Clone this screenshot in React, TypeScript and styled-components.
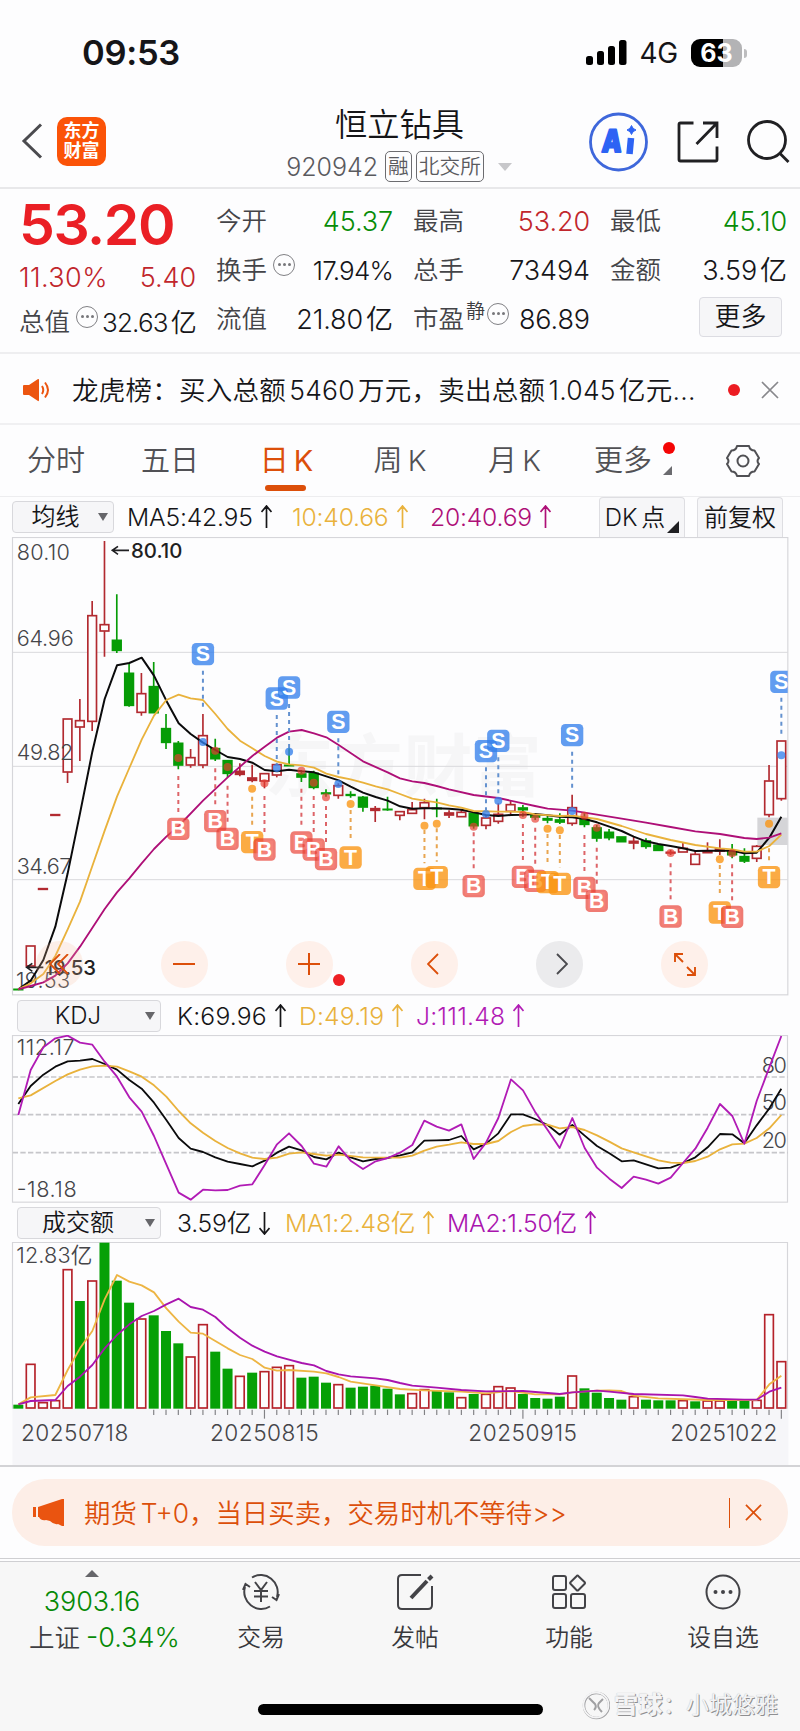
import React from "react";
import styled, { createGlobalStyle } from "styled-components";

const FONT = `Inter, "Noto Sans CJK SC", "Liberation Sans", sans-serif`;
const RED = "#b22a30";
const GREEN = "#069c06";
const AMBER = "#e9b23c";
const ORANGE = "#dc4f0a";

const GlobalStyle = createGlobalStyle`
  * { box-sizing: border-box; }
  body { margin: 0; background: #fdfdfe; font-family: ${FONT}; font-weight: 350; color: #151518; }
  button { font: inherit; color: inherit; border: 0; background: none; padding: 0; }
  svg { display: block; flex: none; }
`;

const Screen = styled.div`
  width: 800px;
  height: 1731px;
  overflow: hidden;
  display: flex;
  flex-direction: column;
  white-space: nowrap;
  line-height: 1;
`;

/* ---------- status bar ---------- */
const StatusBar = styled.div`
  height: 92px;
  padding: 14px 53px 0 82px;
  display: flex;
  align-items: center;
`;
const Clock = styled.div`
  font-size: 34.5px;
  font-weight: 600;
  letter-spacing: -0.3px;
  padding-top: 1px;
  flex: 1;
`;
const Network = styled.div`
  font-size: 28px;
  font-weight: 400;
  letter-spacing: -0.2px;
  margin: 0 13px 0 12px;
`;
const Battery = styled.div`
  width: 51px;
  height: 28px;
  border-radius: 9px;
  background: linear-gradient(90deg, #000 63%, #b3b3b5 63%);
  color: #fff;
  font-size: 25px;
  font-weight: 700;
  display: flex;
  align-items: center;
  justify-content: center;
`;
const BatteryTip = styled.div`
  width: 3px;
  height: 9px;
  margin-left: 2px;
  border-radius: 0 3px 3px 0;
  background: #bdbdbf;
`;

/* ---------- header ---------- */
const Header = styled.header`
  height: 97px;
  border-bottom: 2px solid #e8e8ea;
  display: grid;
  grid-template-columns: 210px 1fr 212px;
`;
const HeaderLeft = styled.div`
  display: flex;
  align-items: center;
  padding: 3px 0 0 21px;
  gap: 14px;
`;
const Logo = styled.div`
  width: 49px;
  height: 49px;
  border-radius: 10px;
  background: #fb5308;
  color: #fff;
  font-size: 18px;
  font-weight: 600;
  line-height: 20px;
  display: grid;
  place-content: center;
`;
const HeaderTitle = styled.div`
  display: flex;
  flex-direction: column;
  align-items: center;
  padding: 16px 10px 0 0;
`;
const StockName = styled.div`
  font-size: 32.3px;
  line-height: 34px;
  padding-left: 11px;
`;
const CodeRow = styled.div`
  display: flex;
  align-items: center;
  gap: 4px;
  margin-top: 9px;
  padding-left: 10px;
  font-size: 25px;
  color: #5a5a5e;
`;
const Code = styled.span`
  letter-spacing: 0;
  margin-right: 3px;
  padding-top: 2px;
`;
const Tag = styled.span`
  height: 31px;
  border: 1.5px solid #6c6c70;
  border-radius: 5px;
  padding: 0 2px;
  font-size: 20.7px;
  line-height: 29px;
`;
const HeaderRight = styled.div`
  display: flex;
  align-items: center;
  gap: 28px;
  padding: 4px 0 0 0.5px;
`;

/* ---------- quote ---------- */
const Quote = styled.section`
  height: 165px;
  padding: 7px 13px 0 19px;
  display: grid;
  grid-template-columns: 177px 177px 177px 177px;
  column-gap: 20px;
  border-bottom: 2px solid #eeeef0;
`;
const QuoteColumn = styled.div`
  display: grid;
  grid-template-rows: 49px 49px 49px;
`;
const PriceColumn = styled.div`
  display: grid;
  grid-template-rows: 56px 48px 43px;
`;
const Price = styled.div`
  font-size: 57px;
  font-weight: 600;
  letter-spacing: -1.4px;
  line-height: 57px;
  color: #ea1f25;
`;
const QuoteRow = styled.div`
  display: flex;
  align-items: center;
`;
const QuoteLabel = styled.span`
  font-size: 25.5px;
  color: #444448;
`;
const QuoteValue = styled.span<{ $color?: string; $start?: boolean; $tight?: boolean }>`
  margin-left: ${(p) => (p.$start ? 0 : "auto")};
  font-size: ${(p) => (p.$tight ? 26 : 27)}px;
  letter-spacing: ${(p) => (p.$start ? 0.4 : p.$tight ? -0.8 : -0.1)}px;
  padding-top: 2px;
  color: ${(p) => p.$color ?? "#161619"};
`;
const Yi = styled.span`
  margin-left: 3px;
`;
const Sup = styled.sup`
  font-size: 19px;
  line-height: 1;
  margin: 0 -4px 14px 2px;
  color: #3c3c40;
`;
const InfoDots = styled.span`
  flex: none;
  width: 22px;
  height: 22px;
  border: 1.5px solid #808084;
  border-radius: 50%;
  margin: 0 0 10px 6px;
  display: flex;
  align-items: center;
  justify-content: center;
  gap: 2px;
  &::before, &::after, i { content: ""; width: 3px; height: 3px; border-radius: 50%; background: #77777b; }
`;
const MoreButton = styled.button`
  width: 83px;
  height: 40px;
  margin-left: auto;
  margin-right: 5px;
  margin-top: -3px;
  border: 1.5px solid #dcdce2;
  border-radius: 4px;
  background: #f6f6f8;
  font-size: 26px;
`;

/* ---------- notice ---------- */
const Notice = styled.section`
  height: 71px;
  padding: 3px 18px 0 23px;
  border-bottom: 2px solid #f0f0f2;
  display: flex;
  align-items: center;
`;
const NoticeText = styled.div`
  flex: 1;
  margin-left: 21px;
  font-size: 26.5px;
  letter-spacing: 0.25px;
  word-spacing: -4.5px;
`;
const NoticeDot = styled.span`
  width: 12px;
  height: 12px;
  border-radius: 50%;
  background: #ec1c22;
`;

/* ---------- tabs ---------- */
const Tabs = styled.nav`
  height: 72px;
  border-bottom: 1px solid #ededef;
  display: grid;
  grid-template-columns: 114px 114px 117px 112px 115px 114px 114px;
`;
const Tab = styled.button<{ $active?: boolean; $shift?: number }>`
  position: relative;
  display: flex;
  align-items: center;
  justify-content: center;
  gap: 5px;
  padding-right: ${(p) => p.$shift ?? 0}px;
  font-size: 29px;
  color: ${(p) => (p.$active ? ORANGE : "#515155")};
  ${(p) => p.$active && "font-weight: 400;"}
`;
const Underline = styled.span`
  position: absolute;
  left: 37px;
  bottom: 5px;
  width: 41px;
  height: 6px;
  border-radius: 3px;
  background: ${ORANGE};
`;
const TabBadge = styled.span`
  position: absolute;
  left: 91px;
  top: 17px;
  width: 12px;
  height: 12px;
  border-radius: 50%;
  background: #f40505;
`;
const Corner = styled.span<{ $size: number; $right: number; $bottom: number; $color: string }>`
  position: absolute;
  right: ${(p) => p.$right}px;
  bottom: ${(p) => p.$bottom}px;
  border-left: ${(p) => p.$size}px solid transparent;
  border-bottom: ${(p) => p.$size}px solid ${(p) => p.$color};
`;

/* ---------- indicator bars ---------- */
const IndicatorBar = styled.div<{ $h: number; $left: number }>`
  height: ${(p) => p.$h}px;
  padding: 0 17px 0 ${(p) => p.$left}px;
  display: flex;
  align-items: center;
`;
const Select = styled.button<{ $w: number }>`
  width: ${(p) => p.$w}px;
  height: 32px;
  border: 1.5px solid #d8d8dc;
  border-radius: 4px;
  background: #f6f6f8;
  display: flex;
  align-items: center;
  padding-right: 5px;
  font-size: 24px;
`;
const SelectLabel = styled.span<{ $shift?: number }>`
  flex: 1;
  text-align: center;
  padding-right: ${(p) => p.$shift ?? 0}px;
`;
const Reading = styled.span<{ $color: string; $x: number; $wide?: boolean }>`
  width: 0;
  margin-left: ${(p) => p.$x}px;
  display: flex;
  align-items: center;
  gap: 8px;
  font-size: 24.7px;
  letter-spacing: ${(p) => (p.$wide ? 0.2 : -0.2)}px;
  padding-top: 1px;
  color: ${(p) => p.$color};
`;
const Readings = styled.div`
  flex: 1;
  display: flex;
  align-items: center;
`;
const ToolButton = styled.button<{ $corner?: boolean }>`
  position: relative;
  width: 86px;
  height: 40px;
  margin-left: 12px;
  border: 1.5px solid #dedee2;
  border-bottom: 0;
  border-radius: 4px 4px 0 0;
  background: #f6f6f8;
  font-size: 24px;
  text-align: center;
  word-spacing: -3px;
  padding-right: ${(p) => (p.$corner ? 14 : 0)}px;
`;

/* ---------- chart ---------- */
const ChartPanel = styled.div`
  position: relative;
`;
const ChartControls = styled.div`
  position: absolute;
  left: 36px;
  top: 404px;
  display: flex;
  gap: 78.6px;
`;
const RoundButton = styled.button<{ $tone: "peach" | "gray" | "faint" }>`
  width: 46.5px;
  height: 46.5px;
  border-radius: 50%;
  display: grid;
  place-items: center;
  background: ${(p) => ({ peach: "#fef0ea", gray: "#ebebed", faint: "rgba(250,190,160,.22)" })[p.$tone]};
`;
const ControlDot = styled.span`
  position: absolute;
  left: 332.5px;
  top: 436.5px;
  width: 12px;
  height: 12px;
  border-radius: 50%;
  background: #ee2024;
`;

/* ---------- promo and bottom ---------- */
const PromoArea = styled.section`
  height: 94px;
  border-top: 2px solid #d3d3d6;
  border-bottom: 1px solid #cfcfd2;
  padding: 12px 12px 0;
`;
const Promo = styled.div`
  height: 67px;
  border-radius: 33px;
  background: #fdeee7;
  color: ${ORANGE};
  display: flex;
  align-items: center;
  padding: 0 26px 0 21px;
`;
const PromoText = styled.div`
  flex: 1;
  margin-left: 19px;
  padding-top: 1px;
  font-size: 26.4px;
  word-spacing: -3.5px;
`;
const Divider = styled.span`
  width: 1.5px;
  height: 30px;
  margin-right: 15px;
  background: ${ORANGE};
`;
const BottomBar = styled.footer`
  position: relative;
  flex: 1;
  margin-top: 2px;
  border-top: 1px solid #cfcfd2;
  background: #f7f7f7;
`;
const BottomNav = styled.div`
  display: grid;
  grid-template-columns: 184px 154px 154px 154px 154px;
`;
const IndexCell = styled.div`
  display: flex;
  flex-direction: column;
  align-items: center;
  padding-top: 8px;
  font-size: 27px;
  color: #068a06;
`;
const IndexPrice = styled.span`
  margin-top: 11px;
  letter-spacing: -0.1px;
`;
const IndexRow = styled.div`
  display: flex;
  gap: 6px;
  align-items: center;
  padding-left: 29px;
  align-self: flex-start;
  margin-top: 9px;
  b { font-weight: 350; font-size: 25.5px; color: #3f3f43; }
`;
const NavItem = styled.button`
  display: flex;
  flex-direction: column;
  align-items: center;
  padding-top: 10px;
  gap: 7px;
  font-size: 23.8px;
  line-height: 38px;
  color: #38383c;
`;
const HomeIndicator = styled.div`
  position: absolute;
  left: 258px;
  bottom: 16px;
  width: 285px;
  height: 11px;
  border-radius: 6px;
  background: #000;
`;
const Watermark = styled.div`
  position: absolute;
  right: 22px;
  bottom: 11px;
  display: flex;
  align-items: center;
  gap: 4px;
  color: #f4f4f5;
  font-size: 23px;
  font-weight: 400;
  text-shadow: 1px 1px 0.5px #8f8f91, 0 0 1px #b4b4b6;
  b { font-weight: 800; font-size: 24px; letter-spacing: 0.5px; }
`;

/* ---------- chart data (three units per pixel) ---------- */
const slot = (i: number) => 55 + i * 36.92;

type Candle = [tone: "r" | "g" | "s", high: number, top: number, bottom: number, low: number];
const candles: Candle[] = [
  ["g", 1378, 1377, 1380, 1378], ["r", 1247, 1247, 1309, 1309], ["s", 1077, 1075, 1079, 1077], ["s", 855, 853, 857, 855],
  ["r", 566, 566, 727, 759], ["r", 507, 571, 592, 693], ["r", 213, 256, 575, 603], ["r", 33, 283, 304, 380],
  ["g", 193, 330, 362, 369], ["g", 398, 429, 527, 530], ["r", 429, 490, 548, 557], ["g", 396, 469, 549, 549],
  ["g", 552, 595, 638, 657], ["g", 633, 639, 706, 718], ["r", 657, 682, 706, 713], ["r", 552, 616, 706, 715],
  ["g", 626, 655, 687, 693], ["g", 690, 691, 731, 742], ["s", 700, 723, 734, 739], ["s", 704, 743, 752, 757],
  ["r", 730, 730, 754, 775], ["r", 703, 703, 736, 742], ["g", 655, 705, 708, 708], ["g", 720, 731, 742, 756],
  ["g", 722, 729, 773, 778], ["g", 778, 788, 792, 800], ["r", 760, 766, 797, 806], ["g", 784, 793, 797, 803],
  ["g", 798, 801, 832, 845], ["s", 828, 835, 842, 876], ["g", 800, 837, 840, 842], ["r", 844, 844, 857, 871],
  ["r", 816, 838, 851, 851], ["r", 806, 817, 834, 868], ["g", 806, 834, 837, 862], ["s", 841, 848, 856, 864],
  ["r", 838, 846, 861, 861], ["g", 849, 849, 888, 896], ["r", 858, 863, 887, 898], ["r", 820, 852, 875, 881],
  ["r", 812, 823, 845, 853], ["g", 825, 833, 840, 860], ["g", 850, 855, 862, 870], ["g", 856, 865, 871, 880],
  ["g", 850, 869, 877, 882], ["r", 794, 832, 881, 887], ["g", 850, 866, 884, 892], ["g", 885, 893, 925, 935],
  ["g", 897, 906, 924, 931], ["g", 920, 920, 936, 936], ["s", 920, 933, 940, 958], ["g", 925, 932, 950, 956],
  ["g", 945, 945, 962, 962], ["s", 960, 966, 970, 975], ["r", 937, 954, 967, 967], ["r", 960, 972, 1004, 1004],
  ["s", 937, 962, 969, 969], ["s", 928, 956, 964, 975], ["g", 942, 962, 975, 985], ["g", 955, 979, 994, 999],
  ["r", 945, 948, 986, 996], ["r", 705, 752, 855, 862], ["r", 632, 632, 807, 812],
];

type Mark = [kind: "S" | "B" | "T", slot: number, label: number, from: number, to: number, dot: number];
const marks: Mark[] = [
  ["B", 13, 896, 738, 850, 684], ["S", 15, 372, 422, 535, 636], ["B", 16, 873, 715, 830, 662], ["B", 17, 926, 767, 880, 711],
  ["T", 19, 936, 800, 890, 776], ["B", 20, 958, 798, 910, 760], ["S", 21, 505, 555, 704, 714], ["S", 22, 472, 522, 655, 665],
  ["B", 23, 937, 776, 890, 722], ["B", 24, 958, 798, 910, 758], ["B", 25, 987, 828, 940, 802], ["S", 26, 575, 625, 745, 762],
  ["T", 27, 982, 840, 935, 822], ["T", 33, 1046, 900, 1000, 887], ["T", 34, 1041, 895, 995, 881], ["B", 37, 1068, 907, 1020, 890],
  ["S", 38, 663, 712, 840, 852], ["S", 39, 632, 682, 800, 812], ["B", 41, 1040, 882, 995, 855], ["B", 42, 1052, 893, 1005, 866],
  ["T", 43, 1056, 912, 1007, 896], ["T", 44, 1061, 915, 1012, 901], ["S", 45, 615, 665, 780, 843], ["B", 46, 1073, 915, 1028, 857],
  ["B", 47, 1112, 953, 1065, 893], ["B", 53, 1159, 1000, 1112, 969], ["T", 57, 1147, 1005, 1100, 988], ["B", 58, 1160, 1003, 1113, 970],
  ["T", 61, 1041, 955, 995, 881], ["S", 62, 455, 503, 615, 676],
];
const markFill = { S: "rgba(52,128,236,.78)", B: "rgba(231,60,48,.68)", T: "rgba(250,148,15,.78)" };
const markLine = { S: "#6391cf", B: "#dd6468", T: "#e8a550" };

const ma5 = "55,1378 92,1352 130,1290 166,1190 203,1030 240,850 277,665 314,507 351,406 388,399 425,383 462,437 499,512 536,580 572,612 609,638 646,660 683,681 720,687 757,698 794,720 831,724 867,719 905,724 942,727 979,739 1016,751 1052,770 1089,788 1127,801 1163,812 1200,829 1237,836 1273,835 1310,835 1347,836 1384,839 1421,847 1458,855 1495,858 1533,855 1569,854 1605,852 1643,856 1679,860 1717,862 1754,867 1791,877 1828,890 1865,903 1901,920 1938,934 1975,942 2012,948 2049,955 2086,963 2123,962 2160,962 2197,962 2233,970 2270,968 2308,923 2344,860";
const ma10 = "55,1378 92,1360 130,1332 166,1278 203,1198 240,1115 277,1008 314,902 351,800 388,714 425,629 462,557 499,510 536,494 572,505 609,510 646,552 683,597 720,632 757,655 794,678 831,695 867,703 905,706 942,713 979,731 1016,741 1052,748 1089,758 1127,769 1163,778 1200,792 1237,806 1273,812 1310,817 1347,826 1384,833 1421,843 1495,845 1533,845 1569,846 1605,853 1679,858 1717,857 1791,867 1865,888 1938,912 2012,930 2086,945 2160,955 2197,958 2233,965 2270,965 2308,948 2344,914";
const ma20 = "55,1378 92,1368 130,1357 166,1337 203,1300 240,1250 314,1137 351,1087 388,1045 425,1000 462,957 499,920 536,888 609,812 683,742 757,678 794,650 831,623 867,605 905,600 942,610 979,622 1016,645 1089,694 1163,727 1200,745 1237,754 1273,759 1310,768 1347,778 1421,795 1495,804 1569,820 1605,828 1643,836 1717,842 1791,854 1865,866 1938,878 2012,891 2086,904 2160,912 2233,924 2270,927 2308,923 2344,910";
const kLine = "55,342 92,288 130,254 166,230 203,214 240,212 277,207 314,222 351,239 388,270 425,296 462,338 499,390 536,444 572,476 609,486 646,502 683,515 720,522 757,529 794,512 831,488 867,470 905,481 942,501 979,508 1016,488 1052,502 1089,514 1127,507 1163,504 1200,496 1237,487 1273,452 1310,451 1347,450 1384,438 1421,478 1458,461 1495,430 1533,373 1569,373 1605,387 1643,405 1679,434 1717,405 1754,437 1791,468 1828,490 1865,514 1901,511 1938,523 1975,535 2012,533 2049,519 2086,502 2123,472 2160,432 2197,433 2233,460 2270,406 2308,355 2344,296";
const jLine = "55,375 92,240 130,172 166,145 203,137 240,158 277,164 314,215 351,260 388,322 425,365 462,438 499,523 536,608 572,629 609,599 646,601 683,600 720,587 757,583 794,525 831,463 867,430 905,468 942,521 979,530 1016,469 1052,512 1089,537 1127,514 1163,504 1200,488 1237,465 1273,392 1310,410 1347,422 1384,403 1421,507 1458,458 1495,384 1533,268 1569,301 1605,365 1643,420 1679,474 1717,384 1754,474 1791,533 1828,566 1865,594 1901,560 1938,569 1975,581 2012,563 2049,519 2086,476 2123,413 2160,342 2197,378 2233,461 2270,333 2308,232 2344,138";
const dLine = "55,325 92,316 166,273 203,253 240,239 277,229 314,227 351,230 388,244 425,260 462,286 499,320 536,363 572,400 609,428 646,453 683,474 720,490 757,503 794,507 831,503 867,491 905,487 942,492 979,497 1016,494 1089,502 1200,503 1237,497 1273,482 1310,470 1347,464 1384,457 1421,462 1458,462 1495,453 1533,426 1569,408 1605,403 1643,404 1679,415 1717,411 1754,420 1791,436 1828,455 1865,475 1901,487 1975,511 2012,518 2049,519 2086,513 2123,500 2160,478 2197,463 2233,461 2270,444 2308,415 2344,375";

const volumes =
  "g600 r477 r592 r586 r193 g289 r227 g114 g228 g294 r341 g332 g379 g416 r455 r358 g441 g492 r513 g504 r499 r486 r481 g519 g516 g534 r538 g549 g546 g543 g552 g569 r565 r553 g557 g563 r577 g568 r567 r544 r548 g568 g580 g582 g576 r512 g551 g564 g580 g585 r574 g585 g587 g587 r586 g590 r587 r587 g587 g589 r585 r328 r469"
    .split(" ")
    .map((v) => ({ up: v[0] === "r", top: Number(v.slice(1)) }));
const volMa1 = "55,598 92,577 166,570 203,495 240,430 277,378 314,283 351,210 388,230 425,241 462,262 499,310 536,350 572,383 609,386 646,408 683,430 720,450 757,462 794,488 831,497 867,495 942,500 979,505 1016,516 1052,530 1127,541 1200,552 1273,556 1384,560 1458,565 1533,558 1605,568 1679,568 1717,562 1791,557 1828,556 1865,558 1901,572 1975,580 2123,585 2270,585 2308,538 2344,512";
const volMa2 = "55,598 92,588 166,585 203,543 240,515 277,480 314,430 351,390 388,358 425,333 462,318 499,298 536,281 572,306 609,314 646,336 683,370 720,398 757,422 794,440 831,454 867,464 905,474 942,481 979,498 1016,508 1052,514 1127,520 1163,525 1200,534 1237,542 1310,548 1384,555 1458,559 1569,558 1643,564 1679,567 1717,562 1791,557 1828,560 1901,567 2049,571 2086,576 2123,581 2233,584 2270,584 2308,560 2344,548";

const Line = ({ points, color, w = 5 }: { points: string; color: string; w?: number }) => (
  <polyline points={points} fill="none" stroke={color} strokeWidth={w} strokeLinejoin="round" />
);

const AxisText = ({ x, y, w, children, weight = 350, size = 65, color = "#454549" }: {
  x: number; y: number; w: number; children: string; weight?: number; size?: number; color?: string;
}) => (
  <text x={x} y={y} textLength={w} fontSize={size} fontWeight={weight} fill={color} fontFamily={FONT}>{children}</text>
);

const CandleChart = () => (
  <svg width="800" height="459" viewBox="0 21 2400 1377">
    <clipPath id="plot"><rect x="38" y="22" width="2325" height="1376" /></clipPath>
    <text x="795" y="782" fontSize="206" fontWeight="700" fill="#f6f6f7" fontFamily={FONT} textLength="830">东方财富</text>
    <path d="M38 367H2363M38 709H2363M38 1049H2363" stroke="#d9d9dd" strokeWidth="3" />
    <rect x="37.5" y="22.5" width="2326" height="1372" fill="none" stroke="#d6d6da" strokeWidth="3.5" />
    <rect x="2272" y="863" width="91" height="82" fill="#d5d5d8" />
    <g clipPath="url(#plot)">
      {candles.map(([tone, high, top, bottom, low], i) => {
        const x = slot(i);
        const color = tone === "g" ? GREEN : RED;
        return (
          <g key={i} stroke={color} strokeWidth="5">
            <path d={`M${x} ${high}V${top}M${x} ${bottom}V${low}`} />
            <rect x={x - 13} y={top + 1} width="26" height={Math.max(bottom - top - 2, 1)} fill={tone === "r" ? "#fdfdfe" : color} />
          </g>
        );
      })}
      <AxisText x={50} y={90} w={160}>80.10</AxisText>
      <AxisText x={50} y={347} w={171}>64.96</AxisText>
      <AxisText x={50} y={689} w={170}>49.82</AxisText>
      <AxisText x={50} y={1031} w={164}>34.67</AxisText>
      <AxisText x={48} y={1374} w={162}>19.53</AxisText>
      <AxisText x={393} y={84} w={154} weight={500} size={61} color="#1f1f22">80.10</AxisText>
      <AxisText x={134} y={1336} w={154} weight={500} size={61} color="#1f1f22">19.53</AxisText>
      <path d="M337 61H387M354 49L337 61L354 73M80 1312H130M97 1300L80 1312L97 1324" fill="none" stroke="#1f1f22" strokeWidth="5" />
      <Line points={ma5} color="#0b0b0c" w={6} />
      <Line points={ma10} color={AMBER} w={5.5} />
      <Line points={ma20} color="#ae0f77" w={5.5} />
      {marks.map(([kind, i, label, from, to, dot]) => (
        <g key={i}>
          <path d={`M${slot(i)} ${from}V${to}`} stroke={markLine[kind]} strokeWidth="6" strokeDasharray="12 12" />
          <circle cx={slot(i)} cy={dot} r="12" fill={markFill[kind]} />
          <rect x={slot(i) - 33.5} y={label - 33} width="67" height="67" rx="13" fill={markFill[kind]} />
          {kind !== "T" && <rect x={slot(i) - 26} y={label - 26} width="52" height="53" rx="4" fill={kind === "B" ? "rgba(255,140,130,.35)" : "none"} />}
          <text x={slot(i)} y={label + 22} textAnchor="middle" fontSize="64" fontWeight="700" fill="#fff" fontFamily="Liberation Sans">{kind}</text>
        </g>
      ))}
    </g>
  </svg>
);

const KdjChart = () => (
  <svg width="800" height="168" viewBox="0 135 2400 504">
    <rect x="37.5" y="136.5" width="2325" height="500" fill="none" stroke="#d6d6da" strokeWidth="3.5" />
    <path d="M38 261H2363M38 374H2363M38 488H2363" stroke="#c6c6ca" strokeWidth="5" strokeDasharray="16 7" />
    <AxisText x={50} y={196} w={174}>112.17</AxisText>
    <AxisText x={50} y={620} w={180}>-18.18</AxisText>
    <AxisText x={2285} y={249} w={76}>80</AxisText>
    <AxisText x={2285} y={361} w={76}>50</AxisText>
    <AxisText x={2285} y={474} w={76}>20</AxisText>
    <Line points={kLine} color="#0b0b0c" w={5.5} />
    <Line points={dLine} color={AMBER} w={5.5} />
    <Line points={jLine} color="#b11bb5" w={5.5} />
  </svg>
);

const VolumeChart = () => (
  <svg width="800" height="223" viewBox="0 111 2400 669">
    <rect x="37" y="611" width="2328" height="170" fill="#f6f6f9" />
    <path d="M37.5 611V112.5H2362.5V611" fill="none" stroke="#d6d6da" strokeWidth="3.5" />
    <AxisText x={49} y={175} w={228}>12.83亿</AxisText>
    {volumes.map(({ up, top }, i) => (
      <g key={i}>
        <rect
          x={slot(i) - (up ? 13 : 15)}
          y={up ? top + 1 : top - 1}
          width={up ? 26 : 30}
          height={up ? 608 - top : 612 - top}
          fill={up ? "#fdfdfe" : "#06a006"}
          stroke={up ? "#b5222a" : "none"}
          strokeWidth="5"
        />
        {i > 10 && <path d={`M${slot(i)} 614V${i === 20 || i === 41 || i === 62 ? 641 : 630}`} stroke="#818185" strokeWidth="3.5" />}
      </g>
    ))}
    <Line points={volMa1} color="#edb544" w={5.5} />
    <Line points={volMa2} color="#a914ae" w={5.5} />
    <AxisText x={63} y={708} w={322} size={68}>20250718</AxisText>
    <AxisText x={630} y={708} w={326} size={68}>20250815</AxisText>
    <AxisText x={1405} y={708} w={326} size={68}>20250915</AxisText>
    <AxisText x={2011} y={708} w={321} size={68}>20251022</AxisText>
  </svg>
);

const Caret = ({ w = 10, h = 8, color = "#66666a", up = false }) => (
  <svg width={w} height={h} viewBox="0 0 10 8" preserveAspectRatio="none"><path d={up ? "M0 8L5 0L10 8Z" : "M0 0L10 0L5 8Z"} fill={color} /></svg>
);
const Trend = ({ down = false }) => (
  <svg width="11" height="24" viewBox="0 0 11 24" fill="none" stroke="currentColor" strokeWidth="1.7">
    <path d={down ? "M5.500 1V23M.5 17L5.500 23L10.500 17" : "M5.500 23V1M.5 7L5.500 1L10.500 7"} />
  </svg>
);
const Cross = ({ size = 18, color = "#88888c" }) => (
  <svg width={size} height={size} viewBox="0 0 18 18"><path d="M1 1L17 17M17 1L1 17" stroke={color} strokeWidth="1.8" /></svg>
);
const Info = () => <InfoDots><i /></InfoDots>;

export default function App() {
  return (
    <Screen>
      <GlobalStyle />
      <StatusBar>
        <Clock>09:53</Clock>
        <svg width="41" height="26" viewBox="0 0 41 26">
          <rect x="0" y="16" width="7" height="9" rx="2.5" /><rect x="11" y="11" width="7" height="14" rx="2.5" />
          <rect x="22" y="6" width="7" height="19" rx="2.5" /><rect x="33" y="0" width="7.5" height="25" rx="2.5" />
        </svg>
        <Network>4G</Network>
        <Battery>63</Battery>
        <BatteryTip />
      </StatusBar>

      <Header>
        <HeaderLeft>
          <svg width="22" height="36" viewBox="0 0 22 36"><path d="M20 1.5L3 18L20 34.5" fill="none" stroke="#4b4b4f" strokeWidth="3" /></svg>
          <Logo><span>东方</span><span>财富</span></Logo>
        </HeaderLeft>
        <HeaderTitle>
          <StockName>恒立钻具</StockName>
          <CodeRow>
            <Code>920942</Code><Tag>融</Tag><Tag>北交所</Tag>
            <svg width="24" height="8" viewBox="0 0 24 8"><path d="M10 0H24L17 8Z" fill="#c7c7ca" /></svg>
          </CodeRow>
        </HeaderTitle>
        <HeaderRight>
          <svg width="60" height="60" viewBox="0 0 60 60">
            <circle cx="29.500" cy="30" r="28" fill="none" stroke="#3e67db" strokeWidth="2.800" />
            <text x="12" y="40.500" fontSize="31" fontWeight="900" fill="#2d63f4" stroke="#2d63f4" strokeWidth="1.800" strokeLinejoin="round" fontFamily={FONT} textLength="20" lengthAdjust="spacingAndGlyphs" transform="translate(3 0) skewX(-4)">A</text>
            <path d="M42 26L40.500 42" stroke="#2d63f4" strokeWidth="6.500" />
            <path d="M42.500 13.500Q43.500 17 47 18Q43.500 19 42.500 22.500Q41.500 19 38 18Q41.500 17 42.500 13.500Z" fill="#2d63f4" stroke="#2d63f4" strokeWidth="1" />
          </svg>
          <svg width="42" height="42" viewBox="0 0 42 42" fill="none" stroke="#202023" strokeWidth="2.800">
            <path d="M16.500 2H3.500Q2 2 2 3.500V38.500Q2 40 3.500 40H38.500Q40 40 40 38.500V25.500M26 2H40V17M40 2L19.500 23" />
          </svg>
          <svg width="44" height="44" viewBox="0 0 44 44" fill="none" stroke="#202023" strokeWidth="2.800">
            <circle cx="20" cy="20" r="18.500" /><path d="M33 33.500L41.500 42" />
          </svg>
        </HeaderRight>
      </Header>

      <Quote>
        <PriceColumn>
          <Price>53.20</Price>
          <QuoteRow>
            <QuoteValue $color="#c1262c" $start>11.30%</QuoteValue>
            <QuoteValue $color="#c1262c">5.40</QuoteValue>
          </QuoteRow>
          <QuoteRow><QuoteLabel>总值</QuoteLabel><Info /><QuoteValue $tight>32.63<Yi>亿</Yi></QuoteValue></QuoteRow>
        </PriceColumn>
        <QuoteColumn>
          <QuoteRow><QuoteLabel>今开</QuoteLabel><QuoteValue $color="#078c07">45.37</QuoteValue></QuoteRow>
          <QuoteRow><QuoteLabel>换手</QuoteLabel><Info /><QuoteValue $tight>17.94%</QuoteValue></QuoteRow>
          <QuoteRow><QuoteLabel>流值</QuoteLabel><QuoteValue>21.80<Yi>亿</Yi></QuoteValue></QuoteRow>
        </QuoteColumn>
        <QuoteColumn>
          <QuoteRow><QuoteLabel>最高</QuoteLabel><QuoteValue $color="#c1262c">53.20</QuoteValue></QuoteRow>
          <QuoteRow><QuoteLabel>总手</QuoteLabel><QuoteValue>73494</QuoteValue></QuoteRow>
          <QuoteRow><QuoteLabel>市盈</QuoteLabel><Sup>静</Sup><Info /><QuoteValue>86.89</QuoteValue></QuoteRow>
        </QuoteColumn>
        <QuoteColumn>
          <QuoteRow><QuoteLabel>最低</QuoteLabel><QuoteValue $color="#078c07">45.10</QuoteValue></QuoteRow>
          <QuoteRow><QuoteLabel>金额</QuoteLabel><QuoteValue>3.59<Yi>亿</Yi></QuoteValue></QuoteRow>
          <QuoteRow><MoreButton>更多</MoreButton></QuoteRow>
        </QuoteColumn>
      </Quote>

      <Notice>
        <svg width="28" height="24" viewBox="0 0 28 24">
          <path d="M1 7H6L15 1Q16 .5 16 2V22Q16 23.500 15 23L6 17H1Q0 17 0 16V8Q0 7 1 7Z" fill="#ec5510" />
          <path d="M19 8Q21.500 12 19 16M22 4.500Q28 12 22 19.500" fill="none" stroke="#ec5510" strokeWidth="2" />
        </svg>
        <NoticeText>龙虎榜：买入总额 5460 万元，卖出总额 1.045 亿元...</NoticeText>
        <NoticeDot />
        <svg width="42" height="18" viewBox="0 0 42 18"><path d="M22 1L38 17M38 1L22 17" stroke="#88888c" strokeWidth="1.700" /></svg>
      </Notice>

      <Tabs>
        <Tab $shift={2}>分时</Tab>
        <Tab $shift={2}>五日</Tab>
        <Tab $active>日<span>K</span><Underline /></Tab>
        <Tab $shift={2}>周<span>K</span></Tab>
        <Tab>月<span>K</span></Tab>
        <Tab $shift={12}>更多<TabBadge /><Corner $size={9} $right={14} $bottom={21} $color="#6b6b6f" /></Tab>
        <Tab>
          <svg width="34" height="32" viewBox="0 0 34 32" fill="none" stroke="#505054" strokeWidth="2">
            <path d="M11 1H23Q24 5.500 28.500 5.500L33 13Q30 16 33 19L28.500 26.500Q24 26.500 23 31H11Q10 26.500 5.500 26.500L1 19Q4 16 1 13L5.500 5.500Q10 5.500 11 1Z" strokeLinejoin="round" />
            <circle cx="17" cy="16" r="5.500" />
          </svg>
        </Tab>
      </Tabs>

      <IndicatorBar $h={40} $left={12}>
        <Select $w={102}><SelectLabel>均线</SelectLabel><Caret /></Select>
        <Readings>
          <Reading $color="#151518" $x={13}>MA5:42.95<Trend /></Reading>
          <Reading $color={AMBER} $x={165}>10:40.66<Trend /></Reading>
          <Reading $color="#ae0f77" $x={138}>20:40.69<Trend /></Reading>
        </Readings>
        <ToolButton $corner>DK 点<Corner $size={12} $right={5} $bottom={4} $color="#1f1f22" /></ToolButton>
        <ToolButton>前复权</ToolButton>
      </IndicatorBar>
      <ChartPanel>
        <CandleChart />
        <ChartControls>
          <RoundButton $tone="faint"><svg width="20" height="20" viewBox="0 0 20 20" fill="none" stroke={ORANGE} strokeWidth="1.800"><path d="M11 0L1 10L11 20M19 0L9 10L19 20" /></svg></RoundButton>
          <RoundButton $tone="peach"><svg width="22" height="22" viewBox="0 0 22 22" stroke={ORANGE} strokeWidth="2"><path d="M0 11H22" /></svg></RoundButton>
          <RoundButton $tone="peach"><svg width="22" height="22" viewBox="0 0 22 22" stroke={ORANGE} strokeWidth="2"><path d="M0 11H22M11 0V22" /></svg></RoundButton>
          <RoundButton $tone="peach"><svg width="15" height="22" viewBox="0 0 15 22" fill="none" stroke={ORANGE} strokeWidth="1.800"><path d="M11 1L1 11L11 21" /></svg></RoundButton>
          <RoundButton $tone="gray"><svg width="16" height="22" viewBox="0 0 16 22" fill="none" stroke="#4a4a4e" strokeWidth="1.900"><path d="M5 1L15 11L5 21" /></svg></RoundButton>
          <RoundButton $tone="peach"><svg width="24" height="24" viewBox="0 0 24 24" fill="none" stroke={ORANGE} strokeWidth="1.900"><path d="M10 2H2V10M2 2L10 10M14 23H22V15M14 15L22 23" /></svg></RoundButton>
        </ChartControls>
        <ControlDot />
      </ChartPanel>

      <IndicatorBar $h={39} $left={17}>
        <Select $w={144}><SelectLabel $shift={7}>KDJ</SelectLabel><Caret /></Select>
        <Readings>
          <Reading $wide $color="#151518" $x={16}>K:69.96<Trend /></Reading>
          <Reading $wide $color={AMBER} $x={122}>D:49.19<Trend /></Reading>
          <Reading $wide $color="#b11bb5" $x={117}>J:111.48<Trend /></Reading>
        </Readings>
      </IndicatorBar>
      <KdjChart />

      <IndicatorBar $h={39} $left={17}>
        <Select $w={144}><SelectLabel $shift={7}>成交额</SelectLabel><Caret /></Select>
        <Readings>
          <Reading $color="#151518" $x={16}>3.59亿<Trend down /></Reading>
          <Reading $color={AMBER} $x={108}>MA1:2.48亿<Trend /></Reading>
          <Reading $color="#a914ae" $x={162}>MA2:1.50亿<Trend /></Reading>
        </Readings>
      </IndicatorBar>
      <VolumeChart />

      <PromoArea>
        <Promo>
          <svg width="32" height="27" viewBox="0 0 32 27" fill="#ea5410">
            <path d="M0 8H3V18H0ZM5 8L29 0H31V27H29L25 25Q21 26 17 22L13 21Q8 22 6 18H5Z" />
          </svg>
          <PromoText>期货 T+0，当日买卖，交易时机不等待&gt;&gt;</PromoText>
          <Divider />
          <Cross size={17} color={ORANGE} />
        </Promo>
      </PromoArea>

      <BottomBar>
        <BottomNav>
          <IndexCell>
            <Caret w={14} h={7} up />
            <IndexPrice>3903.16</IndexPrice>
            <IndexRow><b>上证</b><span>-0.34%</span></IndexRow>
          </IndexCell>
          <NavItem>
            <svg width="42" height="40" viewBox="0 0 42 40" fill="none" stroke="#434347" strokeWidth="2">
              <path d="M12 5.500A17 17 0 0 1 37 25M39 22L36.500 28L32 25M30 34.500A17 17 0 0 1 5 15M3 18L5.500 12L10 15M15 10L21 18L27 10M21 18V30M14 19H28M14 24.500H28" />
            </svg>交易
          </NavItem>
          <NavItem>
            <svg width="40" height="40" viewBox="0 0 40 40" fill="none" stroke="#434347" strokeWidth="2">
              <path d="M26 3H7Q3 3 3 7V33Q3 37 7 37H33Q37 37 37 33V14" /><path d="M16 26L32 9" strokeWidth="4" /><path d="M33.500 7.500L37 4" strokeWidth="4" />
            </svg>发帖
          </NavItem>
          <NavItem>
            <svg width="40" height="40" viewBox="0 0 40 40" fill="none" stroke="#434347" strokeWidth="2">
              <rect x="4" y="4" width="13" height="14" rx="2" /><rect x="4" y="22" width="13" height="14" rx="2" /><rect x="22" y="22" width="14" height="14" rx="2" /><path d="M27.500 4.200Q28.500 3 29.500 4.200L35.500 10Q36.500 11 35.500 12L29.500 18Q28.500 19 27.500 18L21.700 12Q20.500 11 21.700 10Z" />
            </svg>功能
          </NavItem>
          <NavItem>
            <svg width="40" height="40" viewBox="0 0 40 40" fill="#434347">
              <circle cx="20" cy="20" r="16.500" fill="none" stroke="#434347" strokeWidth="2" /><circle cx="12.500" cy="20" r="2" /><circle cx="20" cy="20" r="2" /><circle cx="27.500" cy="20" r="2" />
            </svg>设自选
          </NavItem>
        </BottomNav>
        <HomeIndicator />
        <Watermark>
          <svg width="28" height="30" viewBox="0 0 28 30" fill="none">
            <circle cx="14.500" cy="15.500" r="12.500" stroke="#a0a0a2" strokeWidth="2.500" /><circle cx="14" cy="15" r="12.500" stroke="#f4f4f5" strokeWidth="1.800" />
            <path d="M7 8L13 14Q15 17 12 20M21 9L17 13Q14 16 20 22" stroke="#a0a0a2" strokeWidth="2" />
          </svg>
          <span><b>雪球</b>：小城悠雅</span>
        </Watermark>
      </BottomBar>
    </Screen>
  );
}
